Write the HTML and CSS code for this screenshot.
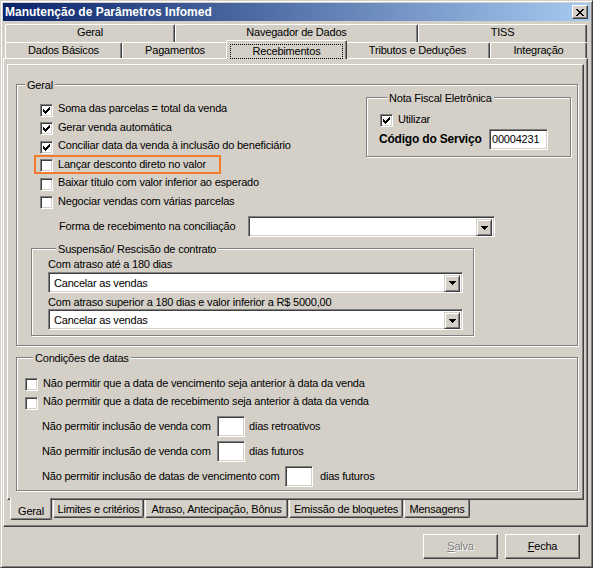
FILE: index.html
```html
<!DOCTYPE html>
<html lang="pt-BR">
<head>
<meta charset="utf-8">
<title>Manutenção de Parâmetros Infomed</title>
<link rel="stylesheet" href="styles.css">
</head>
<body>
<div class="window">
  <div class="titlebar">
    <span class="title">Manutenção de Parâmetros Infomed</span>
    <span class="close"><svg width="8" height="7" viewBox="0 0 8 7" shape-rendering="crispEdges"><path fill="#000" d="M0 0h2v1H0zM6 0h2v1H6zM1 1h2v1H1zM5 1h2v1H5zM2 2h4v1H2zM3 3h2v1H3zM2 4h4v1H2zM1 5h2v1H1zM5 5h2v1H5zM0 6h2v1H0zM6 6h2v1H6z"/></svg></span>
  </div>
  <div class="tabstrip">
    <div class="tabrow row1">
      <div class="tab">Geral</div>
      <div class="tab">Navegador de Dados</div>
      <div class="tab">TISS</div>
    </div>
    <div class="tabrow row2">
      <div class="tab">Dados Básicos</div>
      <div class="tab">Pagamentos</div>
      <div class="tab active"><span class="focus">Recebimentos</span></div>
      <div class="tab">Tributos e Deduções</div>
      <div class="tab">Integração</div>
    </div>
  </div>
  <div class="page">
    <div class="subpage">
      <div class="group g-geral">
        <div class="gtitle">Geral</div>
        <div class="geral-top">
          <div class="checks">
            <div class="chk"><span class="box"><svg class="tick" width="7" height="7" viewBox="0 0 7 7" shape-rendering="crispEdges"><path fill="#000" d="M6 0h1v1H6zM5 1h2v1H5zM0 2h1v1H0zM4 2h3v1H4zM0 3h2v1H0zM3 3h3v1H3zM0 4h5v1H0zM1 5h3v1H1zM2 6h1v1H2z"/></svg></span><span>Soma das parcelas = total da venda</span></div>
            <div class="chk"><span class="box"><svg class="tick" width="7" height="7" viewBox="0 0 7 7" shape-rendering="crispEdges"><path fill="#000" d="M6 0h1v1H6zM5 1h2v1H5zM0 2h1v1H0zM4 2h3v1H4zM0 3h2v1H0zM3 3h3v1H3zM0 4h5v1H0zM1 5h3v1H1zM2 6h1v1H2z"/></svg></span><span>Gerar venda automática</span></div>
            <div class="chk"><span class="box"><svg class="tick" width="7" height="7" viewBox="0 0 7 7" shape-rendering="crispEdges"><path fill="#000" d="M6 0h1v1H6zM5 1h2v1H5zM0 2h1v1H0zM4 2h3v1H4zM0 3h2v1H0zM3 3h3v1H3zM0 4h5v1H0zM1 5h3v1H1zM2 6h1v1H2z"/></svg></span><span>Conciliar data da venda à inclusão do beneficiário</span></div>
            <div class="chk hl"><span class="box"></span><span>Lançar desconto direto no valor</span></div>
            <div class="chk"><span class="box"></span><span>Baixar título com valor inferior ao esperado</span></div>
            <div class="chk"><span class="box"></span><span>Negociar vendas com várias parcelas</span></div>
          </div>
          <div class="group g-nf">
            <div class="gtitle">Nota Fiscal Eletrônica</div>
            <div class="chk nf-chk"><span class="box"><svg class="tick" width="7" height="7" viewBox="0 0 7 7" shape-rendering="crispEdges"><path fill="#000" d="M6 0h1v1H6zM5 1h2v1H5zM0 2h1v1H0zM4 2h3v1H4zM0 3h2v1H0zM3 3h3v1H3zM0 4h5v1H0zM1 5h3v1H1zM2 6h1v1H2z"/></svg></span><span>Utilizar</span></div>
            <div class="codigo"><span class="bold">Código do Serviço</span><span class="edit code">00004231</span></div>
          </div>
        </div>
        <div class="forma">
          <span>Forma de recebimento na conciliação</span>
          <span class="combo"><span class="combo-text"></span><span class="drop"><svg width="7" height="4" viewBox="0 0 7 4" shape-rendering="crispEdges"><path fill="#000" d="M0 0h7v1H0zM1 1h5v1H1zM2 2h3v1H2zM3 3h1v1H3z"/></svg></span></span>
        </div>
        <div class="group g-susp">
          <div class="gtitle">Suspensão/ Rescisão de contrato</div>
          <div class="lbl l1">Com atraso até a 180 dias</div>
          <div class="combo c1"><span class="combo-text">Cancelar as vendas</span><span class="drop"><svg width="7" height="4" viewBox="0 0 7 4" shape-rendering="crispEdges"><path fill="#000" d="M0 0h7v1H0zM1 1h5v1H1zM2 2h3v1H2zM3 3h1v1H3z"/></svg></span></div>
          <div class="lbl l2">Com atraso superior a 180 dias e valor inferior a R$ 5000,00</div>
          <div class="combo c2"><span class="combo-text">Cancelar as vendas</span><span class="drop"><svg width="7" height="4" viewBox="0 0 7 4" shape-rendering="crispEdges"><path fill="#000" d="M0 0h7v1H0zM1 1h5v1H1zM2 2h3v1H2zM3 3h1v1H3z"/></svg></span></div>
        </div>
      </div>
      <div class="group g-datas">
        <div class="gtitle">Condições de datas</div>
        <div class="chk dchk first"><span class="box"></span><span>Não permitir que a data de vencimento seja anterior à data da venda</span></div>
        <div class="chk dchk"><span class="box"></span><span>Não permitir que a data de recebimento seja anterior à data da venda</span></div>
        <div class="drow r1"><span>Não permitir inclusão de venda com</span><span class="edit"></span><span class="after">dias retroativos</span></div>
        <div class="drow r2"><span>Não permitir inclusão de venda com</span><span class="edit"></span><span class="after">dias futuros</span></div>
        <div class="drow r3"><span>Não permitir inclusão de datas de vencimento com</span><span class="edit"></span><span class="after">dias futuros</span></div>
      </div>
    </div>
    <div class="subtabs">
      <div class="stab active">Geral</div>
      <div class="stab w1">Limites e critérios</div>
      <div class="stab w2">Atraso, Antecipação, Bônus</div>
      <div class="stab w3">Emissão de bloquetes</div>
      <div class="stab w4">Mensagens</div>
    </div>
  </div>
  <div class="buttons">
    <div class="btn disabled"><u>S</u>alva</div>
    <div class="btn"><u>F</u>echa</div>
  </div>
</div>
</body>
</html>
```

FILE: styles.css
```css
* { box-sizing: border-box; }
html, body { margin: 0; padding: 0; }
body {
  width: 593px;
  height: 568px;
  overflow: hidden;
  background: #D4D0C8;
  font-family: "Liberation Sans", Arial, sans-serif;
  font-size: 11px;
  line-height: 13px;
  letter-spacing: -0.2px;
  color: #000;
}

.window {
  width: 593px;
  height: 568px;
  border: 1px solid;
  border-color: #D4D0C8 #404040 #404040 #D4D0C8;
  box-shadow: inset 1px 1px #fff, inset -1px -1px #808080;
  padding: 2px;
  display: flex;
  flex-direction: column;
  background: #D4D0C8;
}

/* title bar */
.titlebar {
  flex: none;
  height: 18px;
  display: flex;
  align-items: center;
  justify-content: space-between;
  padding: 0 2px;
  background: linear-gradient(to right, #0A246A, #A6CAF0);
}
.title {
  color: #fff;
  font-weight: bold;
  font-size: 12px;
  letter-spacing: 0;
}
.close {
  width: 16px;
  height: 14px;
  background: #D4D0C8;
  border: 1px solid;
  border-color: #fff #404040 #404040 #fff;
  box-shadow: inset -1px -1px #808080;
  display: flex;
  align-items: center;
  justify-content: center;
}
.close svg { display: block; }

/* top tabs */
.tabstrip {
  flex: none;
  margin-top: 3px;
  padding-left: 2px;
  position: relative;
  z-index: 1;
}
.tabrow { display: grid; }
.row1 { height: 18px; grid-template-columns: 170px 243px 169px; }
.row2 { height: 16px; grid-template-columns: 117px 106px 117px 145px 97px; }
.tab {
  border-top: 1px solid #fff;
  border-left: 1px solid #fff;
  border-right: 1px solid #404040;
  box-shadow: inset -1px 0 #808080;
  border-radius: 2px 2px 0 0;
  text-align: center;
  line-height: 15px;
  background: #D4D0C8;
}
.row2 .tab { line-height: 15px; }
.tab.active {
  margin: -2px -2px -1px;
  padding: 3px 3px 0 3px;
  position: relative;
}
.focus {
  display: block;
  height: 15px;
  border: 1px dotted #000;
  line-height: 13px;
}

/* outer page */
.page {
  flex: none;
  margin-right: 2px;
  border: 1px solid;
  border-color: #fff #404040 #404040 #fff;
  box-shadow: inset -1px -1px #808080;
  padding: 5px 3px 6px 3px;
}
.subpage {
  height: 436px;
  border: 1px solid;
  border-color: #fff #404040 #404040 #fff;
  box-shadow: inset -1px -1px #808080;
  padding: 19px 0 0 8px;
}

/* group boxes */
.group {
  border: 1px solid #808080;
  box-shadow: inset 1px 1px #fff, 1px 1px #fff;
}
.gtitle {
  width: max-content;
  height: 13px;
  margin: -6px 0 0 8px;
  padding: 0 2px;
  background: #D4D0C8;
}
.g-geral { width: 562px; padding: 0 0 9px 0; }
.geral-top { display: flex; align-items: flex-start; }
.checks { flex: 1; padding: 7.5px 0 0 23px; }

/* checkbox rows */
.chk { display: flex; align-items: center; height: 18.5px; }
.box {
  flex: none;
  width: 13px;
  height: 13px;
  margin: 3px 5px 0 0;
  background: #fff;
  border: 1px solid;
  border-color: #808080 #fff #fff #808080;
  box-shadow: inset 1px 1px #404040, inset -1px -1px #D4D0C8;
}
.tick { display: block; margin: 2px 0 0 2px; }
.chk.hl {
  width: 187px;
  margin-left: -6px;
  padding-left: 4px;
  border: 2px solid #F47A2C;
}

/* nota fiscal */
.g-nf { width: 205px; margin: 5px 6px 0 0; padding: 0 0 6px 12px; }
.nf-chk { margin: 5px 0 0 1px; }
.codigo {
  display: grid;
  grid-template-columns: 110px 59px;
  align-items: center;
  height: 21px;
}
.bold { font-weight: bold; font-size: 12px; letter-spacing: -0.2px; }

/* edits & combos */
.edit {
  display: block;
  height: 21px;
  background: #fff;
  border: 1px solid;
  border-color: #808080 #fff #fff #808080;
  box-shadow: inset 1px 1px #404040, inset -1px -1px #D4D0C8;
}
.edit.code { padding: 3px 0 0 2px; line-height: 13px; }
.combo {
  display: flex;
  height: 21px;
  padding: 2px;
  background: #fff;
  border: 1px solid;
  border-color: #808080 #fff #fff #808080;
  box-shadow: inset 1px 1px #404040, inset -1px -1px #D4D0C8;
}
.combo-text { flex: 1; padding-left: 3px; line-height: 16px; }
.drop {
  flex: none;
  width: 16px;
  height: 17px;
  background: #D4D0C8;
  border: 1px solid;
  border-color: #D4D0C8 #404040 #404040 #D4D0C8;
  box-shadow: inset 1px 1px #fff, inset -1px -1px #808080;
  display: flex;
  align-items: center;
  justify-content: center;
}
.drop svg { display: block; }

.forma {
  display: grid;
  grid-template-columns: 189px 247px;
  align-items: center;
  height: 21px;
  margin: 5.5px 0 0 42px;
}

/* suspensão */
.g-susp { width: 443px; margin: 11px 0 0 14px; padding: 0 10px 5px 16px; }
.lbl { margin-top: 1.5px; }
.lbl.l2 { margin-top: 3px; }
.c1 { margin-top: 1px; }
.c2 { margin-top: 0.5px; }

/* condições */
.g-datas { width: 562px; margin-top: 11px; padding: 0 0 3px 8px; }
.dchk.first { margin-top: 9px; }
.drow {
  display: grid;
  align-items: center;
  height: 21px;
  margin: 4px 0 0 17px;
}
.drow.r1 { margin-top: 5px; }
.drow.r1, .drow.r2 { grid-template-columns: 175px 28px auto; }
.drow.r3 { grid-template-columns: 243px 28px auto; }
.drow .after { padding-left: 4px; }
.drow.r3 .after { padding-left: 7px; }

/* bottom sub tabs */
.subtabs {
  display: flex;
  align-items: flex-start;
  height: 20px;
  margin-left: 3px;
}
.stab {
  height: 18px;
  margin-left: 1px;
  padding-top: 2px;
  border: 1px solid;
  border-top: none;
  border-color: #fff #404040 #404040 #fff;
  box-shadow: inset -1px -1px #808080;
  border-radius: 0 0 2px 2px;
  text-align: center;
  line-height: 14px;
}
.stab.active {
  width: 42px;
  height: 22px;
  margin: -2px 0 0 0;
  padding-top: 7px;
  line-height: 13px;
  background: #D4D0C8;
  position: relative;
}
.w1 { width: 91px; }
.w2 { width: 143px; }
.w3 { width: 114px; }
.w4 { width: 66px; }

/* buttons */
.buttons {
  display: flex;
  justify-content: flex-end;
  gap: 7px;
  padding: 7px 10px 0 0;
}
.btn {
  width: 75px;
  height: 25px;
  border: 1px solid;
  border-color: #fff #404040 #404040 #fff;
  box-shadow: inset -1px -1px #808080;
  display: flex;
  align-items: center;
  justify-content: center;
}
.btn.disabled { color: #808080; text-shadow: 1px 1px #fff; }
```
